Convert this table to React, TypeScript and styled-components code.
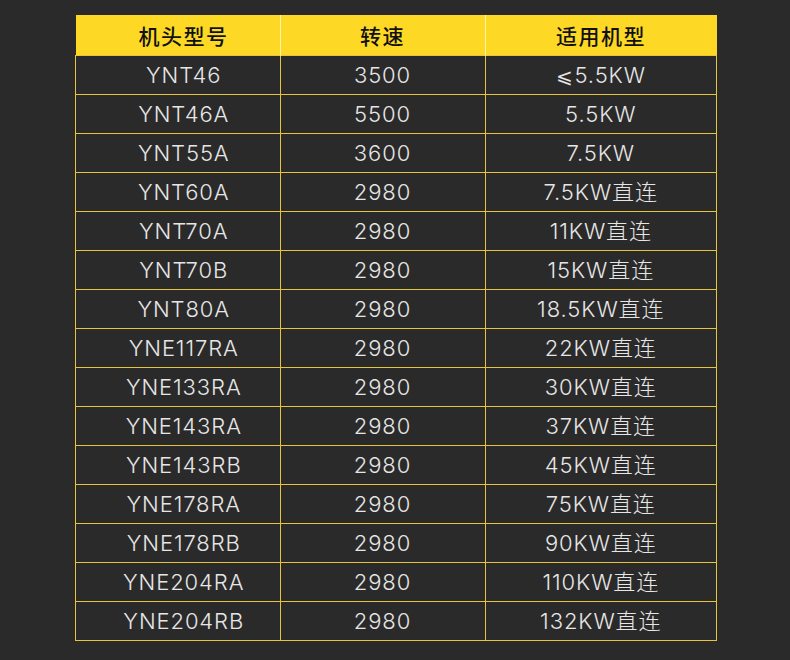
import React from "react";
import styled, { createGlobalStyle } from "styled-components";

const Global = createGlobalStyle`
  html, body { margin: 0; padding: 0; background: #2b2a2a; }
  body { width: 790px; height: 660px; overflow: hidden; }
`;

const Page = styled.div`
  width: 790px;
  height: 660px;
  background: #2b2a2a;
  padding: 15px 0 0 75px;
  box-sizing: border-box;
`;

const Table = styled.table`
  border-collapse: collapse;
  table-layout: fixed;
  width: 639px;
  font-family: "Inter", "Noto Sans CJK SC", sans-serif;
`;

const HeadCell = styled.th<{ $w: number }>`
  width: ${(p) => p.$w}px;
  height: 40px;
  padding: 0;
  background: #fdd825;
  color: #111;
  font-family: "Noto Sans CJK SC", sans-serif;
  font-weight: 500;
  font-size: 21px;
  letter-spacing: 1.5px;
  text-align: center;
  border-left: 1px solid #fff3b0;
  &:first-child { border-left: none; text-indent: 12px; }
`;

const Cell = styled.td`
  height: 38px;
  padding: 0;
  text-align: center;
  color: #e6e6e6;
  font-size: 22px;
  font-weight: 300;
  letter-spacing: 0.9px;
  border: 1px solid #e7c53a;
  line-height: 1;
  &:first-child { text-indent: 12px; }
`;

const Sym = styled.span`
  font-family: "DejaVu Sans", sans-serif;
  font-size: 20px;
  margin-right: 1px;
`;

const rows: [string, string, string][] = [
  ["YNT46", "3500", "5.5KW"],
  ["YNT46A", "5500", "5.5KW"],
  ["YNT55A", "3600", "7.5KW"],
  ["YNT60A", "2980", "7.5KW直连"],
  ["YNT70A", "2980", "11KW直连"],
  ["YNT70B", "2980", "15KW直连"],
  ["YNT80A", "2980", "18.5KW直连"],
  ["YNE117RA", "2980", "22KW直连"],
  ["YNE133RA", "2980", "30KW直连"],
  ["YNE143RA", "2980", "37KW直连"],
  ["YNE143RB", "2980", "45KW直连"],
  ["YNE178RA", "2980", "75KW直连"],
  ["YNE178RB", "2980", "90KW直连"],
  ["YNE204RA", "2980", "110KW直连"],
  ["YNE204RB", "2980", "132KW直连"],
];

export default function App() {
  return (
    <Page>
      <Global />
      <Table>
        <thead>
          <tr>
            <HeadCell $w={204}>机头型号</HeadCell>
            <HeadCell $w={204}>转速</HeadCell>
            <HeadCell $w={231}>适用机型</HeadCell>
          </tr>
        </thead>
        <tbody>
          {rows.map((r, ri) => (
            <tr key={r[0]}>
              <Cell>{r[0]}</Cell>
              <Cell>{r[1]}</Cell>
              <Cell>
                {ri === 0 && <Sym>⩽</Sym>}
                {r[2]}
              </Cell>
            </tr>
          ))}
        </tbody>
      </Table>
    </Page>
  );
}
